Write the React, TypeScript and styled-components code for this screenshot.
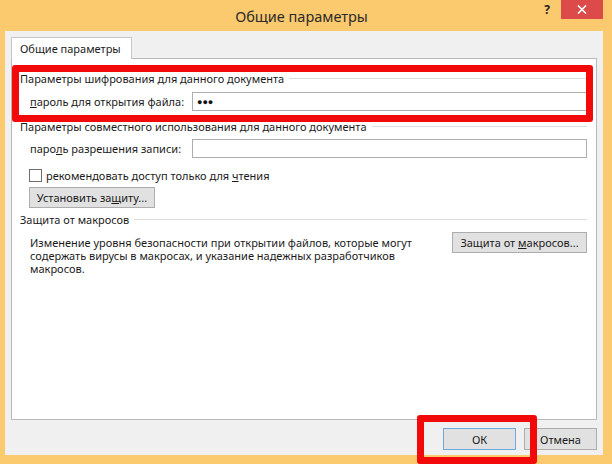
import React from 'react';
import styled, { createGlobalStyle } from 'styled-components';

const GlobalStyle = createGlobalStyle`
  html, body {
    margin: 0;
    padding: 0;
    background: #ffffff;
  }
  body {
    font-family: "Noto Sans", "Liberation Sans", sans-serif;
    font-size: 11px;
    color: #1b1b1b;
  }
`;

const Window = styled.div`
  position: relative;
  width: 612px;
  height: 464px;
  box-sizing: border-box;
  background: #fbc96e;
  padding: 0 9px 9px 5px;
  display: flex;
  flex-direction: column;
  overflow: hidden;
`;

const TitleBar = styled.div`
  height: 31px;
  margin: 0 -9px 0 -5px;
  padding-right: 9px;
  display: grid;
  grid-template-columns: 1fr auto 1fr;
  align-items: start;
`;

const Title = styled.div`
  grid-column: 2;
  font-size: 14.5px;
  line-height: 20px;
  padding-top: 6px;
  color: #2b2b2b;
`;

const Controls = styled.div`
  grid-column: 3;
  justify-self: end;
  display: flex;
  align-items: flex-start;
`;

const HelpButton = styled.div`
  width: 28px;
  height: 19px;
  font-size: 12px;
  font-weight: 700;
  line-height: 19px;
  text-align: center;
  color: #222;
`;

const CloseButton = styled.div`
  width: 42px;
  height: 19px;
  background: #dc4a4a;
  color: #fff;
  display: flex;
  align-items: center;
  justify-content: center;
`;

const Client = styled.div`
  flex: 1;
  background: #f0f0f0;
  padding: 6px 6px 0 6px;
  display: flex;
  flex-direction: column;
`;

const TabStrip = styled.div`
  display: flex;
  position: relative;
  z-index: 1;
  margin-bottom: -1px;
`;

const Tab = styled.div`
  height: 22px;
  box-sizing: border-box;
  padding: 0 0 0 8px;
  width: 121px;
  background: #ffffff;
  border: 1px solid #c6c6c6;
  border-bottom: none;
  line-height: 21px;
  font-size: 11px;
`;

const Panel = styled.div`
  flex: 1;
  background: #ffffff;
  border: 1px solid #b9b9b9;
  padding: 11px 9px 0 8px;
  display: flex;
  flex-direction: column;
`;

const GroupHeader = styled.div<{ $gap: number }>`
  display: flex;
  align-items: center;
  height: 16px;
  margin-top: ${(p) => p.$gap}px;
  white-space: nowrap;
  &::after {
    content: '';
    flex: 1;
    margin-left: 5px;
    border-top: 1px solid #dcdcdc;
  }
`;

const FieldRow = styled.div<{ $gap: number }>`
  display: flex;
  align-items: center;
  margin-top: ${(p) => p.$gap}px;
  padding-left: 10px;
`;

const FieldLabel = styled.label`
  width: 162px;
  flex-shrink: 0;
  white-space: nowrap;
`;

const TextBox = styled.div`
  flex: 1;
  height: 19px;
  box-sizing: border-box;
  border: 1px solid #abadb3;
  background: #fff;
  padding-left: 4px;
  display: flex;
  align-items: center;
  font-size: 9px;
  color: #111;
`;

const CheckRow = styled.div`
  display: flex;
  align-items: center;
  height: 15px;
  margin-top: 10px;
  padding-left: 9px;
  gap: 4px;
`;

const CheckBox = styled.span`
  width: 13px;
  height: 13px;
  box-sizing: border-box;
  border: 1px solid #6f6f6f;
  background: #fff;
`;

const Button = styled.button<{ $width: number; $default?: boolean }>`
  width: ${(p) => p.$width}px;
  height: 21px;
  box-sizing: border-box;
  padding: 0;
  font-family: inherit;
  font-size: 11px;
  color: #1b1b1b;
  background: #e1e1e1;
  border: 1px solid ${(p) => (p.$default ? '#6fa8dc' : '#adadad')};
  flex-shrink: 0;
`;

const ProtectButton = styled(Button)`
  margin-top: 4px;
  margin-left: 9px;
`;

const MacroRow = styled.div`
  display: flex;
  align-items: flex-start;
  justify-content: space-between;
  margin-top: 5px;
  padding-left: 10px;
`;

const MacroText = styled.p`
  margin: 0;
  padding-top: 4px;
  line-height: 13px;
  white-space: nowrap;
`;

const Footer = styled.div`
  height: 35px;
  box-sizing: border-box;
  padding: 8px 0 0 0;
  display: flex;
  justify-content: flex-end;
  align-items: flex-start;
  gap: 8px;
`;

const FooterButton = styled(Button)`
  height: 22px;
`;

const Highlight = styled.div<{ $x: number; $y: number; $w: number; $h: number }>`
  position: absolute;
  left: ${(p) => p.$x}px;
  top: ${(p) => p.$y}px;
  width: ${(p) => p.$w}px;
  height: ${(p) => p.$h}px;
  box-sizing: border-box;
  border: 7px solid #f20a0a;
  border-radius: 3px;
  pointer-events: none;
`;

const App = () => {
  return (
    <>
      <GlobalStyle />
      <Window>
        <TitleBar>
          <Title>Общие параметры</Title>
          <Controls>
            <HelpButton>?</HelpButton>
            <CloseButton>
              <svg width="10" height="9" viewBox="0 0 10 9">
                <path d="M1 0.5 L9 8.5 M9 0.5 L1 8.5" stroke="#fff" strokeWidth="1.6" />
              </svg>
            </CloseButton>
          </Controls>
        </TitleBar>
        <Client>
          <TabStrip>
            <Tab>Общие параметры</Tab>
          </TabStrip>
          <Panel>
            <GroupHeader $gap={0}>Параметры шифрования для данного документа</GroupHeader>
            <FieldRow $gap={6}>
              <FieldLabel>
                <u>п</u>ароль для открытия файла:
              </FieldLabel>
              <TextBox>●●●</TextBox>
            </FieldRow>
            <GroupHeader $gap={7}>Параметры совместного использования для данного документа</GroupHeader>
            <FieldRow $gap={5}>
              <FieldLabel>
                паро<u>л</u>ь разрешения записи:
              </FieldLabel>
              <TextBox />
            </FieldRow>
            <CheckRow>
              <CheckBox />
              <span>
                рекомендовать доступ только для <u>ч</u>тения
              </span>
            </CheckRow>
            <ProtectButton $width={126}>
              Установить за<u>щ</u>иту...
            </ProtectButton>
            <GroupHeader $gap={3}>Защита от макросов</GroupHeader>
            <MacroRow>
              <MacroText>
                Изменение уровня безопасности при открытии файлов, которые могут
                <br />
                содержать вирусы в макросах, и указание надежных разработчиков
                <br />
                макросов.
              </MacroText>
              <Button $width={135}>
                Защита от <u>м</u>акросов...
              </Button>
            </MacroRow>
          </Panel>
          <Footer>
            <FooterButton $width={73} $default>
              ОК
            </FooterButton>
            <FooterButton $width={73}>Отмена</FooterButton>
          </Footer>
        </Client>
        <Highlight $x={12} $y={65} $w={581} $h={57} />
        <Highlight $x={417} $y={415} $w={120} $h={49} />
      </Window>
    </>
  );
};

export default App;
